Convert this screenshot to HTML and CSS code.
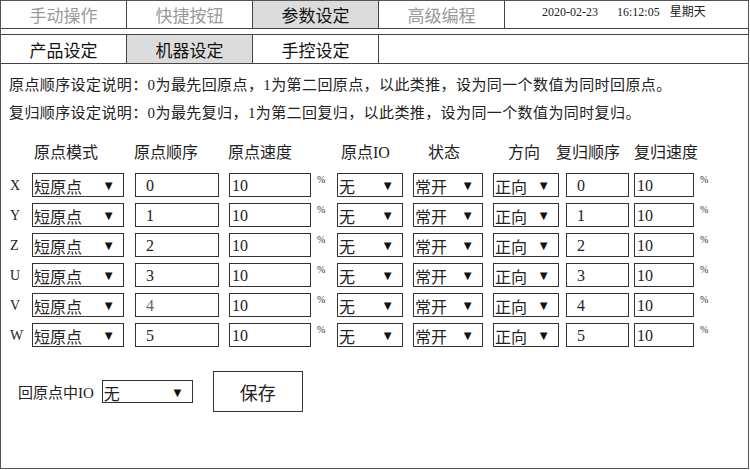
FILE: index.html
```html
<!DOCTYPE html>
<html lang="zh">
<head>
<meta charset="utf-8">
<link rel="stylesheet" href="styles.css">
</head>
<body>
<div class="frame">
  <div class="tabs top">
    <div class="tab dim">手动操作</div>
    <div class="tab dim">快捷按钮</div>
    <div class="tab on">参数设定</div>
    <div class="tab dim">高级编程</div>
    <div class="clock"><span>2020-02-23</span><span class="t">16:12:05</span><span class="w">星期天</span></div>
  </div>
  <div class="tabs sub">
    <div class="tab">产品设定</div>
    <div class="tab on">机器设定</div>
    <div class="tab">手控设定</div>
  </div>
  <div class="content">
    <p class="note">原点顺序设定说明：0为最先回原点，1为第二回原点，以此类推，设为同一个数值为同时回原点。</p>
    <p class="note">复归顺序设定说明：0为最先复归，1为第二回复归，以此类推，设为同一个数值为同时复归。</p>
    <div class="grid">
      <div class="hd"></div>
      <div class="hd h2">原点模式</div>
      <div class="hd h3">原点顺序</div>
      <div class="hd h4">原点速度</div>
      <div class="hd h5">原点IO</div>
      <div class="hd h6">状态</div>
      <div class="hd h7">方向</div>
      <div class="hd h8">复归顺序</div>
      <div class="hd h9">复归速度</div>

      <div class="ax">X</div><div class="sel w-mode"><span>短原点</span><i>▼</i></div><div class="inp w-ord pad">0</div><div class="cell"><div class="inp w-spd">10</div><span class="pct">%</span></div><div class="sel w-io"><span>无</span><i>▼</i></div><div class="sel w-st"><span>常开</span><i>▼</i></div><div class="sel w-dir"><span>正向</span><i>▼</i></div><div class="inp w-ro pad">0</div><div class="cell"><div class="inp w-rs">10</div><span class="pct">%</span></div>
      <div class="ax">Y</div><div class="sel w-mode"><span>短原点</span><i>▼</i></div><div class="inp w-ord pad">1</div><div class="cell"><div class="inp w-spd">10</div><span class="pct">%</span></div><div class="sel w-io"><span>无</span><i>▼</i></div><div class="sel w-st"><span>常开</span><i>▼</i></div><div class="sel w-dir"><span>正向</span><i>▼</i></div><div class="inp w-ro pad">1</div><div class="cell"><div class="inp w-rs">10</div><span class="pct">%</span></div>
      <div class="ax">Z</div><div class="sel w-mode"><span>短原点</span><i>▼</i></div><div class="inp w-ord pad">2</div><div class="cell"><div class="inp w-spd">10</div><span class="pct">%</span></div><div class="sel w-io"><span>无</span><i>▼</i></div><div class="sel w-st"><span>常开</span><i>▼</i></div><div class="sel w-dir"><span>正向</span><i>▼</i></div><div class="inp w-ro pad">2</div><div class="cell"><div class="inp w-rs">10</div><span class="pct">%</span></div>
      <div class="ax">U</div><div class="sel w-mode"><span>短原点</span><i>▼</i></div><div class="inp w-ord pad">3</div><div class="cell"><div class="inp w-spd">10</div><span class="pct">%</span></div><div class="sel w-io"><span>无</span><i>▼</i></div><div class="sel w-st"><span>常开</span><i>▼</i></div><div class="sel w-dir"><span>正向</span><i>▼</i></div><div class="inp w-ro pad">3</div><div class="cell"><div class="inp w-rs">10</div><span class="pct">%</span></div>
      <div class="ax">V</div><div class="sel w-mode"><span>短原点</span><i>▼</i></div><div class="inp w-ord pad light">4</div><div class="cell"><div class="inp w-spd">10</div><span class="pct">%</span></div><div class="sel w-io"><span>无</span><i>▼</i></div><div class="sel w-st"><span>常开</span><i>▼</i></div><div class="sel w-dir"><span>正向</span><i>▼</i></div><div class="inp w-ro pad">4</div><div class="cell"><div class="inp w-rs">10</div><span class="pct">%</span></div>
      <div class="ax">W</div><div class="sel w-mode"><span>短原点</span><i>▼</i></div><div class="inp w-ord pad">5</div><div class="cell"><div class="inp w-spd">10</div><span class="pct">%</span></div><div class="sel w-io"><span>无</span><i>▼</i></div><div class="sel w-st"><span>常开</span><i>▼</i></div><div class="sel w-dir"><span>正向</span><i>▼</i></div><div class="inp w-ro pad">5</div><div class="cell"><div class="inp w-rs">10</div><span class="pct">%</span></div>
    </div>
    <div class="bottom">
      <span class="blabel">回原点中IO</span>
      <div class="sel w-bio"><span>无</span><i>▼</i></div>
      <div class="save">保存</div>
    </div>
  </div>
</div>
</body>
</html>
```

FILE: styles.css
```css
* { box-sizing: border-box; }
body {
  margin: 0;
  background: #fff;
  font-family: "Liberation Serif", "Noto Sans CJK SC", serif;
  color: #222;
}
.frame {
  width: 749px;
  height: 469px;
  border: 1px solid #555;
  display: flex;
  flex-direction: column;
}
.tabs {
  display: flex;
  height: 28px;
  border-bottom: 1px solid #444;
}
.tabs.sub {
  margin-top: 5px;
  height: 30px;
  border-top: 1px solid #444;
}
.tab {
  width: 126px;
  border-right: 1px solid #444;
  display: flex;
  align-items: center;
  justify-content: center;
  font-size: 17px;
  color: #111;
}
.tab.dim { color: #9a9a9a; }
.tab.on { background: #dcdcdc; }
.clock {
  flex: 1;
  font-size: 12px;
  padding: 1px 0 0 37px;
  color: #222;
}
.clock .t { margin-left: 19px; }
.clock .w { margin-left: 10px; }
.content {
  flex: 1;
  padding: 7px 0 0 8px;
}
.note {
  margin: 0;
  font-size: 15px;
  line-height: 28px;
  letter-spacing: 0.4px;
  color: #222;
}
.grid {
  display: grid;
  grid-template-columns: 23px 103px 94px 108px 76px 80px 73px 68px 1fr;
  grid-template-rows: 28px repeat(6, 24px);
  row-gap: 6px;
  margin-top: 12px;
  align-items: center;
}
.hd {
  font-size: 16px;
  line-height: 28px;
  white-space: nowrap;
  color: #222;
}
.h2 { padding-left: 2px; }
.h3 { margin-left: -1px; }
.h4 { margin-left: -1px; }
.h5 { padding-left: 4px; }
.h6 { padding-left: 15px; }
.h7 { padding-left: 15px; }
.h8 { margin-left: -10px; }
.ax {
  font-size: 14px;
  padding-left: 1px;
  padding-top: 2px;
  color: #222;
}
.sel {
  height: 24px;
  border: 1px solid #333;
  display: flex;
  align-items: center;
  justify-content: space-between;
  padding: 2px 8px 0 1px;
  font-size: 16px;
  color: #222;
}
.sel i {
  font-style: normal;
  font-size: 13px;
  color: #111;
}
.inp {
  height: 24px;
  border: 1px solid #333;
  display: flex;
  align-items: flex-end;
  padding: 0 0 1px 2px;
  font-size: 16px;
  color: #222;
}
.inp.pad { padding-left: 10px; }
.inp.light { color: #666; }
.cell {
  display: flex;
  align-items: flex-start;
  height: 24px;
}
.pct {
  font-size: 10px;
  margin-left: 6px;
  margin-top: 1px;
  color: #333;
}
.w-mode { width: 92px; }
.w-ord { width: 84px; }
.w-spd { width: 82px; }
.w-io { width: 66px; }
.w-st { width: 70px; }
.w-dir { width: 66px; }
.w-ro { width: 63px; }
.w-rs { width: 60px; }
.w-bio { width: 91px; height: 23px; }
.bottom {
  display: flex;
  align-items: center;
  margin-top: 24px;
  padding-left: 9px;
}
.blabel {
  font-size: 15px;
  color: #222;
}
.bottom .sel { margin-left: 8px; }
.save {
  margin-left: 20px;
  width: 90px;
  height: 41px;
  border: 1px solid #333;
  display: flex;
  align-items: center;
  justify-content: center;
  font-size: 18px;
  color: #222;
}
```
